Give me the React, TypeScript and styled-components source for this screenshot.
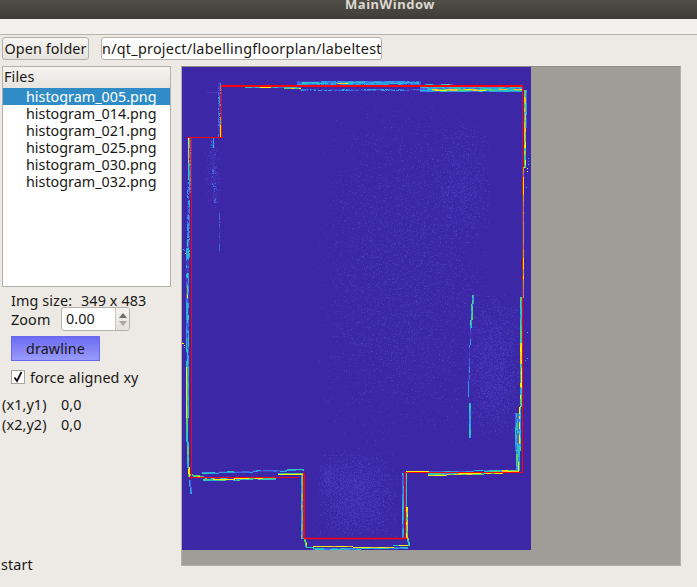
import styled, { createGlobalStyle } from 'styled-components';

const GlobalStyle = createGlobalStyle`
  html, body {
    margin: 0;
    padding: 0;
    background: #edeae5;
    overflow: hidden;
  }
  * {
    box-sizing: border-box;
  }
`;

const Window = styled.div`
  display: flex;
  flex-direction: column;
  width: 697px;
  height: 587px;
  overflow: hidden;
  background: #edeae5;
  color: #1a1815;
  font-family: 'Noto Sans', 'Open Sans', sans-serif;
  font-size: 14.35px;
  letter-spacing: 0.12px;
`;

const TitleBar = styled.div`
  flex: none;
  height: 19px;
  padding-left: 345px;
  background: linear-gradient(#524f48, #3e3c37);
  color: #dcd8cf;
  font-size: 13px;
  font-weight: 700;
  line-height: 9px;
  letter-spacing: 0.55px;
  white-space: nowrap;
  overflow: hidden;
`;

const MenuBar = styled.div`
  flex: none;
  height: 16px;
  background: #f3f1ed;
  border-bottom: 1px solid #b8b4ad;
`;

const Toolbar = styled.div`
  flex: none;
  display: flex;
  gap: 12px;
  height: 31px;
  padding: 2px 0 0 2px;
`;

const PushButton = styled.div`
  width: 87px;
  height: 23px;
  border: 1px solid #b5b1aa;
  border-radius: 3px;
  background: linear-gradient(#f7f6f3, #e6e3de);
  text-align: center;
  line-height: 21px;
  white-space: nowrap;
`;

const PathField = styled.div`
  width: 281px;
  height: 23px;
  margin-left: 0;
  border: 1px solid #b5b1aa;
  border-radius: 3px;
  background: #fff;
  line-height: 21px;
  letter-spacing: 0.27px;
  white-space: nowrap;
  overflow: hidden;
`;

const Main = styled.div`
  flex: 1;
  display: flex;
  gap: 10px;
  padding-left: 2px;
`;

const Sidebar = styled.div`
  flex: none;
  display: flex;
  flex-direction: column;
  width: 169px;
`;

const FileList = styled.div`
  flex: none;
  height: 221px;
  border: 1px solid #b5b1aa;
  background: #fff;
`;

const ListHeader = styled.div`
  height: 21px;
  padding-left: 1px;
  background: linear-gradient(#f6f4f1, #e8e5e0);
  line-height: 20px;
`;

const FileRow = styled.div<{ $selected?: boolean }>`
  height: 17px;
  padding-left: 23px;
  background: ${(p) => (p.$selected ? '#308cc6' : 'transparent')};
  color: ${(p) => (p.$selected ? '#ffffff' : '#1a1815')};
  line-height: 17px;
  letter-spacing: 0;
`;

const InfoRow = styled.div`
  display: flex;
  align-items: center;
  height: 20px;
  margin-top: 3px;
  padding-left: 9px;
`;

const InfoLabel = styled.span`
  width: 70px;
`;

const ZoomRow = styled.div`
  display: flex;
  align-items: center;
  height: 24px;
  margin-top: -3px;
  padding-left: 9px;
`;

const ZoomLabel = styled.span`
  width: 50px;
`;

const SpinBox = styled.div`
  display: flex;
  width: 69px;
  height: 24px;
  border: 1px solid #b5b1aa;
  border-radius: 3px;
  background: #fff;
  overflow: hidden;
`;

const SpinValue = styled.div`
  flex: 1;
  padding-left: 4px;
  line-height: 22px;
`;

const SpinArrows = styled.div`
  display: flex;
  flex-direction: column;
  align-items: center;
  justify-content: center;
  gap: 3px;
  width: 14px;
  border-left: 1px solid #c9c6c0;
  background: linear-gradient(#f5f3f0, #e4e1dc);
`;

const Arrow = styled.i<{ $down?: boolean }>`
  display: block;
  width: 0;
  height: 0;
  border-left: 4px solid transparent;
  border-right: 4px solid transparent;
  ${(p) =>
    p.$down
      ? 'border-top: 5px solid #a9a69f;'
      : 'border-bottom: 5px solid #6f6c65;'}
`;

const DrawButton = styled.div`
  width: 89px;
  height: 25px;
  margin: 5px 0 0 9px;
  background:
    linear-gradient(#2020c8, #2020c8) 0 0 / 1px 1px no-repeat,
    linear-gradient(#2020c8, #2020c8) 100% 0 / 1px 1px no-repeat,
    linear-gradient(#2020c8, #2020c8) 0 100% / 1px 1px no-repeat,
    linear-gradient(#2020c8, #2020c8) 100% 100% / 1px 1px no-repeat,
    linear-gradient(#6a6af2, #9c9cff);
  background-origin: border-box;
  border: 1px solid #6868ee;
  text-align: center;
  line-height: 23px;
`;

const CheckRow = styled.label`
  display: flex;
  align-items: center;
  gap: 5px;
  height: 16px;
  margin-top: 8px;
  padding-left: 9px;
  white-space: nowrap;
`;

const CheckBox = styled.span`
  display: flex;
  align-items: center;
  justify-content: center;
  width: 14px;
  height: 14px;
  border: 1px solid #a8a49d;
  background: #fff;
`;

const CoordTable = styled.div`
  display: grid;
  grid-template-columns: 59px 1fr;
  grid-auto-rows: 20px;
  align-items: center;
  margin-top: 9px;
`;

const StatusText = styled.div`
  margin-top: auto;
  margin-bottom: 12px;
  margin-left: -1px;
  line-height: 20px;
`;

const CanvasFrame = styled.div`
  flex: none;
  width: 500px;
  height: 500px;
  border: 1px solid #b3b0a9;
  border-top-color: #8f8c86;
  background: #9f9d97;
`;

const Heatmap = styled.svg`
  display: block;
`;

const FILES = [
  'histogram_005.png',
  'histogram_014.png',
  'histogram_021.png',
  'histogram_025.png',
  'histogram_030.png',
  'histogram_032.png',
];

const DIM = '#4130b0';
const FAINT = '#4639bc';
const BLUE = '#3f66e4';
const SKY = '#2f9ce8';
const CYAN = '#27c4c4';
const GREEN = '#5ad070';
const ORANGE = '#ffc02a';
const YELLOW = '#fff200';
const LAYERS = [DIM, FAINT, BLUE, SKY, CYAN, GREEN, ORANGE, YELLOW];

// seeded so that the heat map is the same on every load
let seed = 20240;
const rnd = () => {
  seed = (seed * 1664525 + 1013904223) % 4294967296;
  return seed / 4294967296;
};

const pixels: Record<string, string[]> = {};
const put = (x: number, y: number, color: string) => {
  (pixels[color] ||= []).push(`M${Math.round(x)} ${Math.round(y)}h1v1h-1z`);
};

// a wall trace: runs of one colour along the line, one row per unit of width
const streak = (
  x1: number,
  y1: number,
  x2: number,
  y2: number,
  width: number,
  palette: string[],
  density = 1,
) => {
  const steps = Math.max(Math.abs(x2 - x1), Math.abs(y2 - y1));
  const vertical = Math.abs(y2 - y1) > Math.abs(x2 - x1);
  for (let w = 0; w < width; w++) {
    let run = 0;
    let color = palette[0];
    for (let i = 0; i <= steps; i++) {
      if (run-- <= 0) {
        color = palette[Math.floor(rnd() * palette.length)];
        run = 1 + Math.floor(rnd() * 7);
      }
      if (rnd() > density) continue;
      const x = x1 + ((x2 - x1) * i) / steps;
      const y = y1 + ((y2 - y1) * i) / steps;
      if (vertical) put(x + w, y, color);
      else put(x, y + w, color);
    }
  }
};

// faint speckle that thins out towards the edge of its box
const noise = (x: number, y: number, w: number, h: number, density: number) => {
  for (let i = 0; i < w; i++) {
    for (let j = 0; j < h; j++) {
      const falloff = Math.sin((Math.PI * (i + 0.5)) / w) * Math.sin((Math.PI * (j + 0.5)) / h);
      if (rnd() < density * falloff) put(x + i, y + j, rnd() < 0.3 ? FAINT : DIM);
    }
  }
};

// interior scans
noise(135, 30, 175, 350, 0.22);
noise(250, 50, 60, 130, 0.3);
noise(285, 225, 55, 150, 0.6);
noise(132, 380, 85, 95, 0.75);
noise(138, 395, 16, 35, 0.8);
noise(22, 72, 18, 70, 0.35);

// top wall
streak(115, 14, 238, 14, 4, [BLUE, SKY, SKY, FAINT], 0.95);
streak(120, 15, 236, 15, 2, [SKY, CYAN, CYAN, BLUE]);
streak(155, 16, 165, 16, 1, [YELLOW, ORANGE]);
streak(40, 18, 65, 18, 1, [CYAN, GREEN, BLUE]);
streak(63, 20, 118, 20, 1, [BLUE, SKY, CYAN]);
streak(78, 20, 88, 20, 1, [YELLOW]);
streak(102, 21, 118, 21, 1, [YELLOW, ORANGE, GREEN]);
streak(118, 22, 238, 22, 2, [BLUE, FAINT, SKY], 0.85);
streak(243, 17, 298, 18, 1, [CYAN, BLUE, GREEN, FAINT]);
streak(238, 20, 340, 20, 5, [SKY, SKY, CYAN, BLUE]);
streak(250, 22, 340, 22, 2, [YELLOW, ORANGE, GREEN, CYAN]);

// upper left step
streak(36, 15, 36, 70, 3, [BLUE, FAINT, SKY], 0.85);
streak(38, 50, 38, 58, 1, [CYAN, GREEN]);
streak(38, 58, 38, 70, 1, [YELLOW, ORANGE]);
streak(25, 25, 36, 25, 1, [FAINT, BLUE]);
streak(29, 71, 31, 135, 4, [FAINT, BLUE, DIM], 0.6);
streak(31, 71, 31, 80, 1, [SKY, CYAN]);
streak(37, 146, 37, 183, 1, [FAINT, BLUE], 0.8);

// left wall
streak(6, 71, 6, 95, 1, [YELLOW, GREEN, ORANGE]);
streak(6, 95, 6, 112, 1, [GREEN, CYAN]);
streak(7, 71, 7, 125, 2, [BLUE, SKY], 0.9);
streak(5, 115, 5, 190, 3, [BLUE, FAINT, SKY], 0.85);
streak(4, 173, 4, 300, 3, [SKY, CYAN, BLUE, FAINT]);
streak(5, 218, 5, 230, 1, [GREEN, YELLOW]);
streak(5, 300, 5, 350, 2, [CYAN, SKY]);
streak(4, 300, 4, 350, 1, [YELLOW]);
streak(4, 350, 5, 400, 2, [CYAN, GREEN, SKY]);
streak(6, 400, 6, 409, 2, [YELLOW, CYAN]);
streak(7, 407, 21, 409, 2, [YELLOW, CYAN, GREEN]);
streak(7, 413, 8, 426, 2, [BLUE, SKY]);

// right wall
streak(342, 23, 342, 100, 2, [YELLOW, ORANGE, CYAN, GREEN]);
streak(344, 23, 344, 60, 1, [SKY, BLUE, FAINT]);
streak(341, 100, 341, 230, 1, [CYAN, GREEN, YELLOW, SKY]);
streak(340, 100, 340, 230, 1, [BLUE, SKY]);
streak(338, 230, 338, 276, 2, [CYAN, SKY, GREEN]);
streak(338, 276, 338, 296, 2, [YELLOW, ORANGE]);
streak(338, 296, 337, 383, 2, [CYAN, GREEN, YELLOW, SKY]);
streak(333, 346, 333, 383, 5, [SKY, CYAN, BLUE]);
streak(334, 383, 334, 403, 4, [CYAN, SKY, GREEN]);
streak(336, 395, 336, 403, 1, [YELLOW]);

// interior wall on the right
streak(290, 228, 288, 260, 2, [CYAN, GREEN, SKY]);
streak(288, 260, 286, 330, 1, [BLUE, SKY, FAINT]);
streak(287, 336, 287, 370, 2, [SKY, CYAN]);

// bottom walls
streak(20, 405, 121, 402, 2, [CYAN, SKY, BLUE, FAINT]);
streak(96, 406, 121, 406, 1, [CYAN, GREEN]);
streak(96, 407, 121, 407, 1, [YELLOW]);
streak(21, 411, 93, 410, 3, [CYAN, GREEN, SKY, FAINT]);
streak(24, 412, 52, 412, 1, [YELLOW, CYAN]);
streak(52, 411, 66, 411, 1, [YELLOW]);
streak(66, 411, 93, 411, 1, [GREEN, CYAN, YELLOW]);
streak(246, 406, 320, 404, 3, [CYAN, GREEN, SKY]);
streak(246, 408, 320, 406, 1, [YELLOW, GREEN, ORANGE]);
streak(277, 406, 298, 406, 1, [YELLOW]);
streak(246, 404, 336, 403, 1, [CYAN, SKY, BLUE]);
streak(320, 403, 336, 403, 2, [YELLOW, ORANGE, GREEN]);
streak(224, 404, 246, 404, 2, [YELLOW]);

// notch
streak(119, 406, 119, 471, 3, [CYAN, SKY, GREEN]);
streak(122, 471, 123, 479, 2, [CYAN, GREEN, YELLOW]);
streak(124, 480, 131, 480, 1, [YELLOW, CYAN]);
streak(131, 481, 225, 480, 2, [SKY, CYAN, BLUE]);
streak(131, 479, 211, 480, 1, [YELLOW, YELLOW, ORANGE]);
streak(211, 478, 225, 478, 1, [YELLOW, CYAN, GREEN]);
streak(220, 406, 220, 471, 2, [SKY, BLUE, CYAN]);
streak(223, 406, 223, 440, 2, [CYAN, GREEN]);
streak(224, 440, 224, 471, 2, [ORANGE, YELLOW, GREEN]);
streak(225, 471, 226, 478, 2, [CYAN, GREEN]);

// stray dots
[
  [346, 91, SKY],
  [346, 94, BLUE],
  [346, 97, CYAN],
  [345, 101, YELLOW],
  [345, 104, YELLOW],
  [344, 120, CYAN],
  [345, 265, CYAN],
  [345, 291, CYAN],
  [343, 293, SKY],
  [1, 182, CYAN],
  [2, 183, SKY],
  [3, 186, YELLOW],
  [1, 276, YELLOW],
  [0, 276, YELLOW],
  [2, 278, YELLOW],
  [2, 280, CYAN],
  [4, 272, SKY],
].forEach(([x, y, color]) => put(x as number, y as number, color as string));

const WALL_LINES = [
  { d: 'M39 19H341', w: 2 },
  { d: 'M39.5 19V70', w: 1 },
  { d: 'M5 70.5H41', w: 1 },
  { d: 'M9.5 70V412', w: 1 },
  { d: 'M8 410.5H117', w: 1 },
  { d: 'M122 406V471', w: 2 },
  { d: 'M122 471.5H225', w: 1.5 },
  { d: 'M223.5 405V471', w: 1 },
  { d: 'M223.7 405.5H341', w: 1 },
  { d: 'M340.5 19V405', w: 1 },
];

const FloorPlan = () => (
  <Heatmap width={349} height={483} viewBox="0 0 349 483">
    <rect width={349} height={483} fill="#3c27a6" />
    {LAYERS.filter((color) => pixels[color]).map((color) => (
      <path key={color} d={pixels[color].join('')} fill={color} shapeRendering="crispEdges" />
    ))}
    {WALL_LINES.map(({ d, w }) => (
      <path key={d} d={d} stroke="#ff0008" strokeWidth={w} fill="none" />
    ))}
  </Heatmap>
);

const App = () => {
  return (
    <Window>
      <GlobalStyle />
      <TitleBar>MainWindow</TitleBar>
      <MenuBar />
      <Toolbar>
        <PushButton>Open folder</PushButton>
        <PathField>n/qt_project/labellingfloorplan/labeltest</PathField>
      </Toolbar>
      <Main>
        <Sidebar>
          <FileList>
            <ListHeader>Files</ListHeader>
            {FILES.map((name, i) => (
              <FileRow key={name} $selected={i === 0}>
                {name}
              </FileRow>
            ))}
          </FileList>
          <InfoRow>
            <InfoLabel>Img size:</InfoLabel>
            <span>349 x 483</span>
          </InfoRow>
          <ZoomRow>
            <ZoomLabel>Zoom</ZoomLabel>
            <SpinBox>
              <SpinValue>0.00</SpinValue>
              <SpinArrows>
                <Arrow />
                <Arrow $down />
              </SpinArrows>
            </SpinBox>
          </ZoomRow>
          <DrawButton>drawline</DrawButton>
          <CheckRow>
            <CheckBox>
              <svg width="10" height="12" viewBox="0 0 10 12">
                <path d="M1.5 6.5 L4 10 L8.5 1" stroke="#111" strokeWidth="1.8" fill="none" />
              </svg>
            </CheckBox>
            force aligned xy
          </CheckRow>
          <CoordTable>
            <span>(x1,y1)</span>
            <span>0,0</span>
            <span>(x2,y2)</span>
            <span>0,0</span>
          </CoordTable>
          <StatusText>start</StatusText>
        </Sidebar>
        <CanvasFrame>
          <FloorPlan />
        </CanvasFrame>
      </Main>
    </Window>
  );
};

export default App;
